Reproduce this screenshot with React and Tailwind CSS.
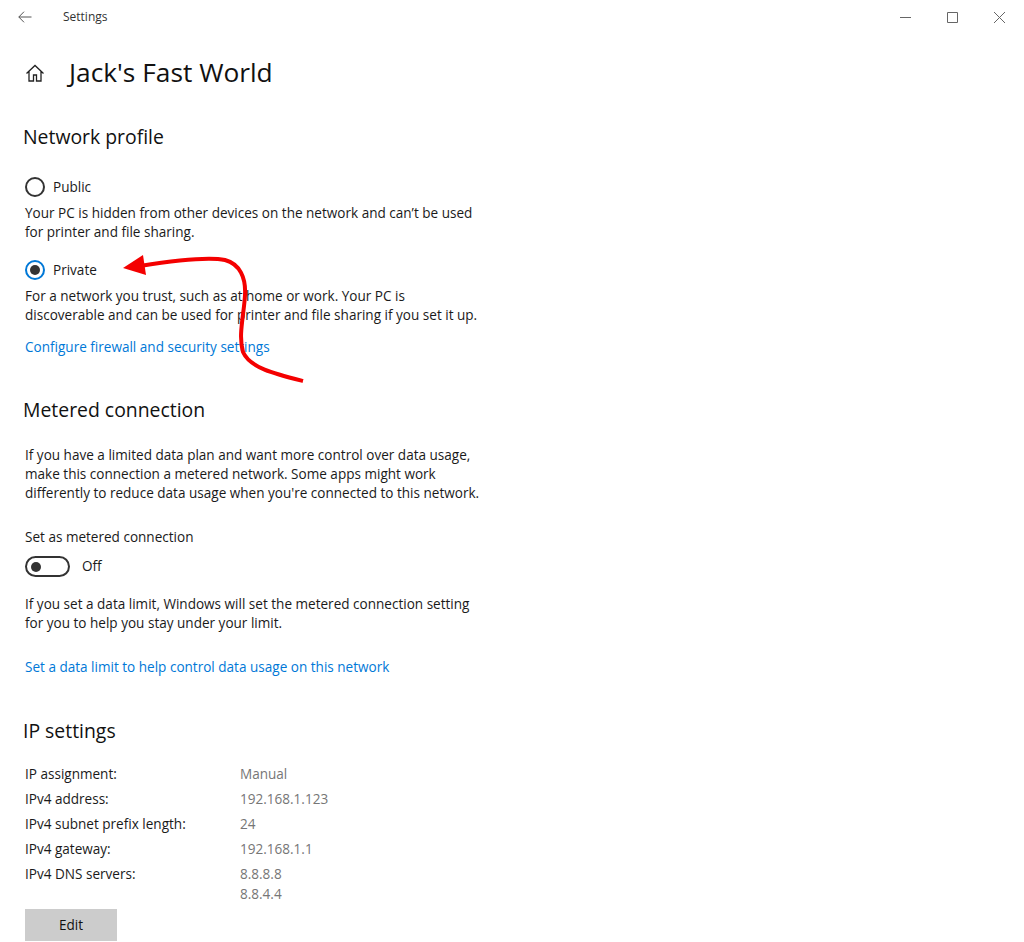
import React from "react";

const ipRows = [
  ["IP assignment:", "Manual"],
  ["IPv4 address:", "192.168.1.123"],
  ["IPv4 subnet prefix length:", "24"],
  ["IPv4 gateway:", "192.168.1.1"],
  ["IPv4 DNS servers:", "8.8.8.8"],
];

function Radio({ checked, label }) {
  return (
    <div className="flex items-center h-[20px] gap-[8px]">
      <div className={`w-[20px] h-[20px] rounded-full border-2 flex items-center justify-center ${checked ? "border-[#0078d7]" : "border-[#333333]"}`}>
        {checked && <div className="w-[10px] h-[10px] rounded-full bg-[#333333]" />}
      </div>
      <span className="text-[13.550px] leading-[19px] text-[#1a1a1a]">{label}</span>
    </div>
  );
}

export default function App() {
  return (
    <div className="relative w-[1024px] h-[942px] overflow-hidden bg-white text-[#111111] font-['Open_Sans','Noto_Sans',sans-serif]">
      {/* title bar */}
      <div className="flex items-center h-[34px]">
        <svg className="ml-[18px] w-[14px] h-[12px] text-[#555555]" viewBox="0 0 14 12" fill="none" stroke="currentColor" strokeWidth="1">
          <path d="M13.500 6H.8M6 .7.8 6 6 11.300" />
        </svg>
        <span className="ml-[31px] text-[12px] text-[#333333]">Settings</span>
        <div className="ml-auto flex items-center text-[#666666]">
          <svg className="w-[11px] h-[11px]" viewBox="0 0 11 11" fill="none" stroke="currentColor">
            <path d="M0 5.500h11" />
          </svg>
          <svg className="ml-[36px] w-[11px] h-[11px]" viewBox="0 0 11 11" fill="none" stroke="currentColor">
            <path d="M.5.500h10v10H.5z" />
          </svg>
          <svg className="ml-[36px] mr-[19px] w-[11px] h-[11px]" viewBox="0 0 11 11" fill="none" stroke="currentColor">
            <path d="m0 0 11 11M11 0 0 11" />
          </svg>
        </div>
      </div>

      <div className="pl-[25px]">
        {/* page header */}
        <div className="flex items-center h-[40px] mt-[19px]">
          <svg className="w-[20px] h-[20px] text-[#222222]" viewBox="0 0 20 20" fill="none" stroke="currentColor" strokeWidth="1.300">
            <path d="M1.500 10.500 10 2.500l8.500 8M4 8.500V18h4.500v-6h3v6H16V8.500" />
          </svg>
          <h1 className="ml-[24px] text-[26.300px] leading-[40px] -mt-[2px] font-normal">Jack's Fast World</h1>
        </div>

        {/* network profile */}
        <h2 className="-ml-[2px] mt-[30px] text-[19.400px] leading-[28px] font-normal">Network profile</h2>
        <div className="mt-[26px]">
          <Radio label="Public" />
        </div>
        <p className="mt-[7px] text-[13.550px] leading-[19px] w-[460px] text-[#1a1a1a]">
          Your PC is hidden from other devices on the network and can’t be used for printer and file sharing.
        </p>
        <div className="mt-[18px]">
          <Radio checked label="Private" />
        </div>
        <p className="mt-[7px] text-[13.550px] leading-[19px] w-[460px] text-[#1a1a1a]">
          For a network you trust, such as at home or work. Your PC is discoverable and can be used for printer and file sharing if you set it up.
        </p>
        <a className="block mt-[13px] text-[13.550px] leading-[19px] text-[#0078d7]">Configure firewall and security settings</a>

        {/* metered connection */}
        <h2 className="-ml-[2px] mt-[39px] text-[19.400px] leading-[28px] font-normal">Metered connection</h2>
        <p className="mt-[22px] text-[13.550px] leading-[19px] w-[460px] text-[#1a1a1a]">
          If you have a limited data plan and want more control over data usage, make this connection a metered network. Some apps might work differently to reduce data usage when you're connected to this network.
        </p>
        <p className="mt-[25px] text-[13.550px] leading-[19px] text-[#1a1a1a]">Set as metered connection</p>
        <div className="flex items-center mt-[9px] h-[21px]">
          <div className="flex items-center w-[45px] h-[21px] rounded-full border-2 border-[#333333] pl-[4px]">
            <div className="w-[10px] h-[10px] rounded-full bg-[#333333]" />
          </div>
          <span className="ml-[12px] text-[13.550px] text-[#1a1a1a]">Off</span>
        </div>
        <p className="mt-[18px] text-[13.550px] leading-[19px] w-[460px] text-[#1a1a1a]">
          If you set a data limit, Windows will set the metered connection setting for you to help you stay under your limit.
        </p>
        <a className="block mt-[25px] text-[13.550px] leading-[19px] text-[#0078d7]">Set a data limit to help control data usage on this network</a>

        {/* ip settings */}
        <h2 className="-ml-[2px] mt-[40px] text-[19.400px] leading-[28px] font-normal">IP settings</h2>
        <div className="mt-[20px] flex flex-col gap-[6px]">
          {ipRows.map(([label, value]) => (
            <div key={label} className="flex text-[13.550px] leading-[19px]">
              <span className="w-[215px] text-[#1a1a1a]">{label}</span>
              <span className="text-[#767676]">{value}</span>
            </div>
          ))}
        </div>
        <div className="pl-[215px] text-[13.550px] leading-[19px] mt-[1px] text-[#767676]">8.8.4.4</div>
        <button className="block mt-[5px] w-[92px] h-[32px] bg-[#cccccc] text-[13.550px] text-[#111111]">Edit</button>
      </div>

      {/* hand-drawn annotation arrow */}
      <svg className="absolute left-0 top-0 pointer-events-none" width="1024" height="942" viewBox="0 0 1024 942" fill="none">
        <path d="M140 266C165 262 205 256 225 260C240 264 246 278 245 295C244 315 238 335 243 352C250 368 275 374 303 381" stroke="#f40000" strokeWidth="4" />
        <path d="M123 268 143 255 146 275Z" fill="#f40000" />
      </svg>
    </div>
  );
}
